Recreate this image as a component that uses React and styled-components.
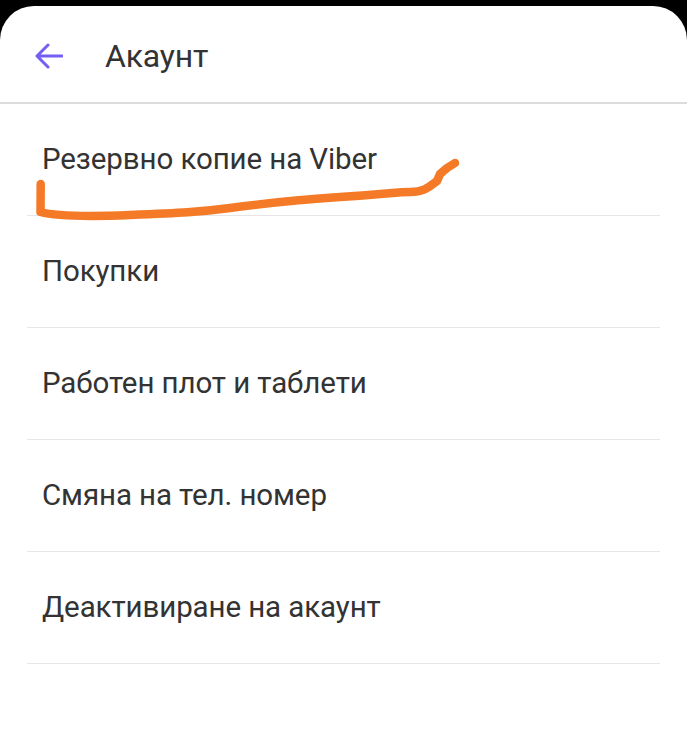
import React from "react";
import styled, { createGlobalStyle } from "styled-components";

const Global = createGlobalStyle`
  html, body { margin: 0; padding: 0; background: #000; }
  body { font-family: Roboto, "Noto Sans", sans-serif; }
`;

const Screen = styled.div`
  position: relative;
  width: 687px;
  height: 750px;
  padding-top: 6px;
  box-sizing: border-box;
  background: #000;
  overflow: hidden;
`;

const Card = styled.div`
  background: #fff;
  height: 100%;
  border-radius: 34px 34px 0 0;
  display: flex;
  flex-direction: column;
`;

const Header = styled.header`
  height: 98px;
  display: flex;
  align-items: center;
  padding: 3px 0 0 35px;
  box-sizing: border-box;
  gap: 42px;
  border-bottom: 2px solid #dcdcdc;
`;

const Title = styled.h1`
  margin: 0;
  font-size: 32px;
  font-weight: 400;
  color: #333;
  letter-spacing: -0.2px;
`;

const List = styled.ul`
  list-style: none;
  margin: 0;
  padding: 0 27px;
`;

const Row = styled.li`
  height: 112px;
  box-sizing: border-box;
  display: flex;
  align-items: center;
  padding: 0 0 2px 15px;
  border-bottom: 1px solid #e6e6e6;
  font-size: 29.5px;
  color: #333;
  letter-spacing: -0.1px;
`;

const Scribble = styled.svg`
  position: absolute;
  left: 0;
  top: 0;
  pointer-events: none;
`;

const BackArrow = () => (
  <svg width="28" height="26" viewBox="0 0 28 26" fill="none">
    <path d="M27 13H3 M13 2L2 13L13 24" stroke="#7360f2" strokeWidth="3" strokeLinecap="round" strokeLinejoin="round" />
  </svg>
);

const items = [
  "Резервно копие на Viber",
  "Покупки",
  "Работен плот и таблети",
  "Смяна на тел. номер",
  "Деактивиране на акаунт",
];

export default function App() {
  return (
    <>
      <Global />
      <Screen>
        <Card>
          <Header>
            <BackArrow />
            <Title>Акаунт</Title>
          </Header>
          <List>
            {items.map((t) => (
              <Row key={t}>{t}</Row>
            ))}
          </List>
        </Card>
        <Scribble width="687" height="750" viewBox="0 0 687 750">
          <path
            d="M40.7 184 L40.5 212 C 55 216, 80 217, 130 215 S 200 212, 230 208 S 290 200, 340 197 S 395 192, 410 192 S 430 186, 437 181 L 440 174 L 447 168 L 455 163"
            stroke="#f57a28"
            strokeWidth="8.5"
            fill="none"
            strokeLinecap="round"
            strokeLinejoin="round"
          />
        </Scribble>
      </Screen>
    </>
  );
}
